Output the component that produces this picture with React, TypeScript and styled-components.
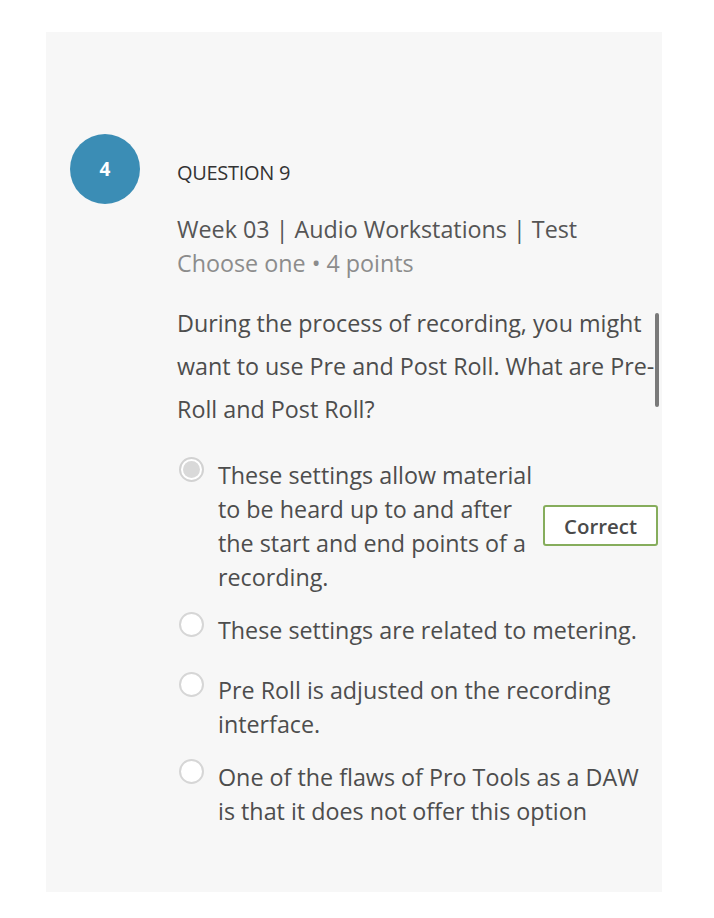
import React from "react";
import styled, { createGlobalStyle } from "styled-components";

const Global = createGlobalStyle`
  html, body { margin: 0; padding: 0; background: #ffffff; }
  body { font-family: "Open Sans", "Noto Sans", sans-serif; -webkit-font-smoothing: antialiased; }
`;

const Page = styled.div`
  width: 714px;
  height: 918px;
  padding: 32px 52px 26px 46px;
  box-sizing: border-box;
`;

const Panel = styled.div`
  position: relative;
  height: 100%;
  background: #f7f7f7;
  padding: 102px 0 0 24px;
  box-sizing: border-box;
  display: grid;
  grid-template-columns: 70px 1fr;
  column-gap: 37px;
  align-content: start;
`;

const Badge = styled.div`
  width: 70px;
  height: 70px;
  border-radius: 50%;
  background: #3b8db5;
  color: #ffffff;
  font-size: 19px;
  font-weight: 700;
  display: flex;
  align-items: center;
  justify-content: center;
`;

const Label = styled.div`
  align-self: center;
  font-size: 20px;
  color: #333333;
  letter-spacing: -0.3px;
  padding-top: 6px;
`;

const Body = styled.div`
  grid-column: 2;
  padding-top: 8px;
`;

const Title = styled.div`
  font-size: 23.3px;
  line-height: 34px;
  color: #555555;
`;

const Sub = styled.div`
  font-size: 23.3px;
  line-height: 34px;
  color: #8c8c8c;
`;

const Question = styled.div`
  margin-top: 22px;
  font-size: 23.3px;
  line-height: 43px;
  color: #4d4d4d;
  width: 484px;
`;

const Scroll = styled.div`
  position: absolute;
  right: 3px;
  top: 281px;
  width: 4px;
  height: 94px;
  border-radius: 2px;
  background: #7a7a7a;
`;

const Options = styled.div`
  margin-top: 26px;
  display: flex;
  flex-direction: column;
  gap: 18px;
`;

const Option = styled.div<{ $extra?: number }>`
  display: flex;
  align-items: flex-start;
  margin-top: ${(p) => p.$extra ?? 0}px;
`;

const Radio = styled.div<{ $selected?: boolean }>`
  flex: none;
  width: 25px;
  height: 25px;
  box-sizing: border-box;
  margin: 0 14px 0 2px;
  border-radius: 50%;
  border: 2px solid ${(p) => (p.$selected ? "#d2d2d2" : "#d6d6d6")};
  background: #ffffff;
  position: relative;
  ${(p) =>
    p.$selected
      ? `&::after { content: ""; position: absolute; inset: 2px; border-radius: 50%; background: #d9d9d9; }`
      : ""}
`;

const OptionText = styled.div<{ $narrow?: boolean }>`
  font-size: 23.3px;
  line-height: 34px;
  color: #4d4d4d;
  margin-top: 1px;
  ${(p) => (p.$narrow ? "width: 322px;" : "width: 425px;")}
`;

const Correct = styled.div`
  align-self: center;
  margin-left: 3px;
  width: 115px;
  height: 41px;
  box-sizing: border-box;
  border: 2px solid #86ad5c;
  border-radius: 3px;
  background: #ffffff;
  display: flex;
  align-items: center;
  justify-content: center;
  font-size: 20.4px;
  font-weight: 600;
  color: #4a4a4a;
`;

const options = [
  {
    text: "These settings allow material to be heard up to and after the start and end points of a recording.",
    selected: true,
    correct: true,
    extra: 0,
  },
  { text: "These settings are related to metering.", extra: 0 },
  { text: "Pre Roll is adjusted on the recording interface.", extra: 7 },
  { text: "One of the flaws of Pro Tools as a DAW is that it does not offer this option", extra: 0 },
];

export default function App() {
  return (
    <>
      <Global />
      <Page>
        <Panel>
          <Badge>4</Badge>
          <Label>QUESTION 9</Label>
          <Body>
            <Title>Week 03 | Audio Workstations | Test</Title>
            <Sub>Choose one • 4 points</Sub>
            <Question>
              During the process of recording, you might want to use Pre and Post Roll. What are Pre-Roll and Post Roll?
            </Question>
            <Options>
              {options.map((o, i) => (
                <Option key={i} $extra={o.extra}>
                  <Radio $selected={o.selected} />
                  <OptionText $narrow={o.correct}>{o.text}</OptionText>
                  {o.correct && <Correct>Correct</Correct>}
                </Option>
              ))}
            </Options>
          </Body>
          <Scroll />
        </Panel>
      </Page>
    </>
  );
}
